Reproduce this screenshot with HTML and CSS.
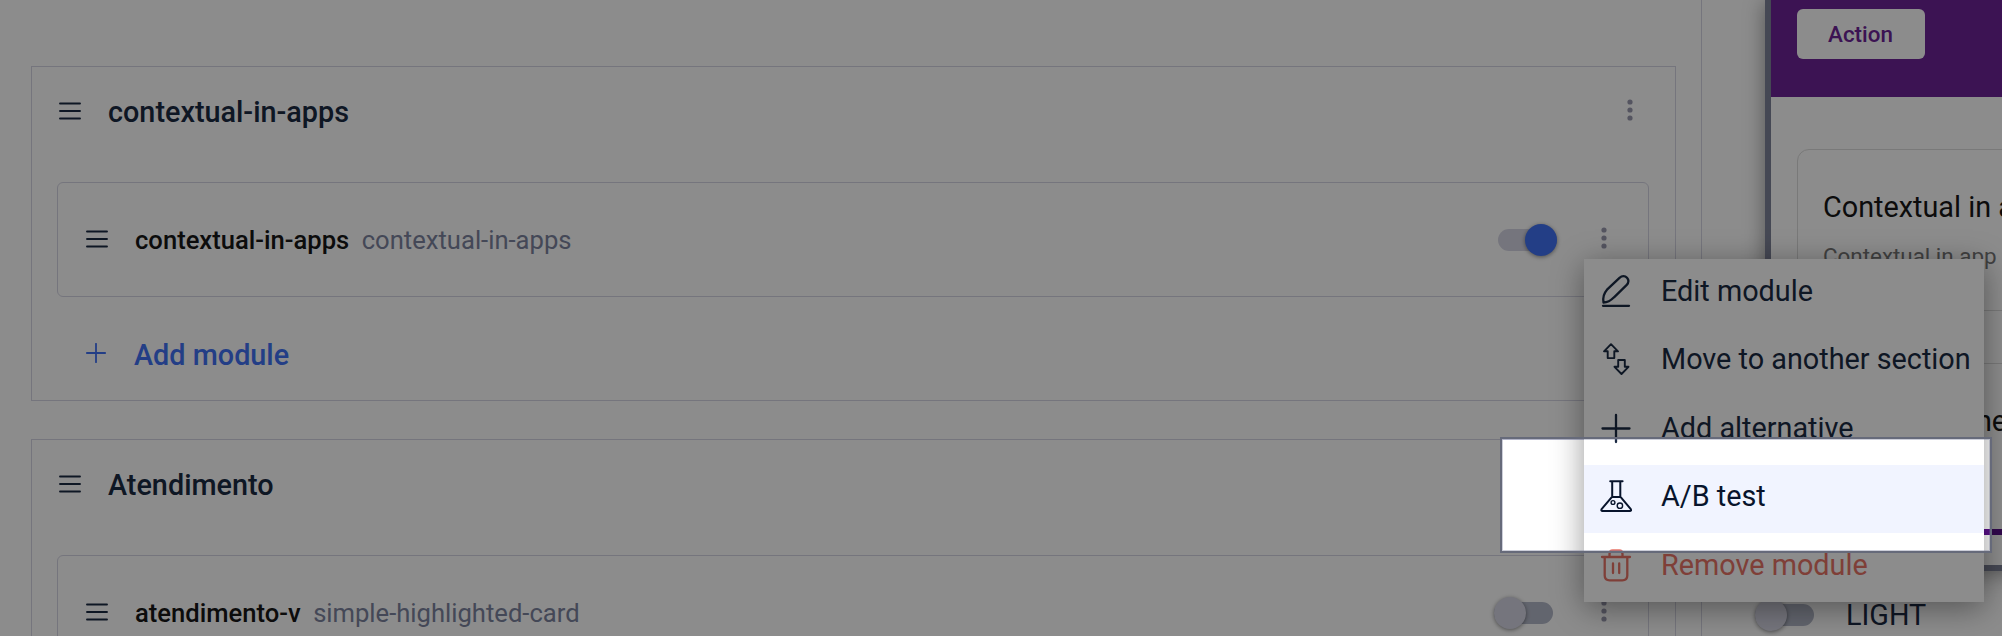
FILE: index.html
```html
<!DOCTYPE html>
<html lang="en">
<head>
<meta charset="utf-8">
<title>Modules</title>
<link rel="stylesheet" href="styles.css">
</head>
<body>
<svg class="defs" aria-hidden="true">
  <symbol id="drag" viewBox="0 0 22 18"><path d="M1 1.500h20M1 9h20M1 16.500h20" fill="none" stroke="currentColor" stroke-width="1.900" stroke-linecap="round"/></symbol>
  <symbol id="dots" viewBox="0 0 6 22"><g fill="currentColor"><circle cx="3" cy="3" r="2.600"/><circle cx="3" cy="11" r="2.600"/><circle cx="3" cy="19" r="2.600"/></g></symbol>
</svg>
<div class="page">
  <main class="editor">
    <section class="section">
      <header class="section-head"><svg class="drag"><use href="#drag"/></svg><h2 class="section-title">contextual-in-apps</h2><svg class="dots"><use href="#dots"/></svg></header>
      <div class="module">
        <svg class="drag"><use href="#drag"/></svg><strong class="name">contextual-in-apps</strong><span class="kind">contextual-in-apps</span>
        <span class="toggle on"><i class="knob"></i></span><svg class="dots"><use href="#dots"/></svg>
      </div>
      <div class="add"><svg class="add-icon" viewBox="0 0 20 20"><path d="M10 .8v18.400M.8 10h18.400" fill="none" stroke="currentColor" stroke-width="1.800" stroke-linecap="round"/></svg><span>Add module</span></div>
    </section>
    <section class="section">
      <header class="section-head"><svg class="drag"><use href="#drag"/></svg><h2 class="section-title">Atendimento</h2><svg class="dots"><use href="#dots"/></svg></header>
      <div class="module">
        <svg class="drag"><use href="#drag"/></svg><strong class="name">atendimento-v</strong><span class="kind">simple-highlighted-card</span>
        <span class="toggle off"><i class="knob"></i></span><svg class="dots"><use href="#dots"/></svg>
      </div>
    </section>
  </main>
  <aside class="preview">
    <div class="phone">
      <div class="hero"><span class="action">Action</span></div>
      <div class="cards">
        <article class="card"><h3 class="card-title">Contextual in app</h3><p class="card-text">Contextual in app</p></article>
        <article class="card second"><h3 class="card-title">Good headline</h3></article>
      </div>
      <div class="tabline"></div>
    </div>
    <div class="theme"><span class="toggle off theme-toggle"><i class="knob"></i></span><span>LIGHT</span></div>
  </aside>
</div>
<div class="menu">
  <div class="item"><svg class="icon" viewBox="0 0 32 32"><path d="M3.500 27.500C2.600 22.700 4 18.200 7 14.700L19.500 2.800C22 .5 25 .5 27 2.800C29 5 28.600 8 26.500 10.200L14 22.300C11 25.400 7.500 27.500 3.500 27.500Z"/><path d="M3 30.800h26"/></svg><span>Edit module</span></div>
  <div class="item"><svg class="icon thin" viewBox="0 0 32 32"><path d="M11 1.200L18 8.300H14.300V15.100H7.700V8.300H4Z"/><path d="M21.500 31L14.500 23.800H18.200V17H24.800V23.800H28.500Z"/></svg><span>Move to another section</span></div>
  <div class="item tall"><svg class="icon" viewBox="0 0 32 32"><path d="M16 3v27M2.500 16.500h27"/></svg><span>Add alternative</span></div>
  <div class="item active"><svg class="icon flask" viewBox="0 0 32 32"><path d="M10.200 1.300h12.400M12.200 1.300V16.700L1.600 29.200Q.8 31 2.600 31H29.800Q31.600 31 30.800 29.200L20.300 16.700V1.300M12.200 16.900h8.100"/><circle class="bubble" cx="13" cy="22.500" r="1.900"/><circle class="bubble" cx="19.900" cy="25.700" r="2.700"/></svg><span>A/B test</span></div>
  <div class="item danger"><svg class="icon" viewBox="0 0 32 32"><path d="M2 8h28M9.500 7.500V5Q9.500 1.500 12.700 1.500H19.300Q22.500 1.500 22.500 5V7.500M4.700 8.500V26.500Q4.700 31.300 9.700 31.300H22.300Q27.300 31.300 27.300 26.500V8.500M13 14.500v9.500M19.200 14.500v9.500"/></svg><span>Remove module</span></div>
</div>
<div class="spotlight"></div>
</body>
</html>
```

FILE: styles.css
```css
* { box-sizing: border-box; }
body { margin: 0; width: 2002px; height: 636px; overflow: hidden; position: relative; background: #fff; color: #1b2a43; font-family: Roboto, sans-serif; }
h2, h3, p { margin: 0; }
.defs { position: absolute; width: 0; height: 0; }
.page { display: flex; height: 636px; overflow: hidden; }
.editor { flex: none; width: 1702px; padding: 66px 25px 0 31px; border-right: 1px solid #d6d6e4; display: flex; flex-direction: column; gap: 38px; }
.section { flex: none; height: 335px; padding: 0 26px 0 25px; border: 1px solid #d6d6e4; }
.section-head { display: flex; align-items: center; height: 115px; padding: 0 16px 27px 2px; }
.drag { flex: none; width: 22px; height: 18px; }
.dots { flex: none; width: 6px; height: 22px; margin-bottom: 2px; color: #9a9aaf; }
.section-title { flex: 1; margin: 1px 0 0 27px; font-size: 28.8px; line-height: 36px; font-weight: 500; }
.module { display: flex; align-items: center; height: 115px; padding: 0 41px 0 28px; border: 1px solid #d6d6e4; border-radius: 6px; }
.module .drag { margin-bottom: 2px; }
.module .dots { margin-bottom: 4px; }
.name { margin-left: 27px; font-size: 25.6px; font-weight: 500; color: #161616; }
.kind { flex: 1; margin-left: 12.500px; font-size: 25.6px; color: #7c839e; }
.toggle { flex: none; display: flex; align-items: center; width: 59px; height: 22px; border-radius: 11px; background: #d6d6e4; }
.knob { width: 32px; height: 32px; border-radius: 50%; box-shadow: 0 1px 4px rgba(0,0,0,.45); }
.on { justify-content: flex-end; margin-right: 44px; }
.on .knob { background: #4072f5; }
.off { margin-right: 48px; background: #b3b8c8; }
.off .knob { background: #d6d6e4; }
.add { display: flex; align-items: center; height: 104px; padding: 12px 0 0 29px; color: #4072f5; font-size: 28.8px; font-weight: 500; }
.add-icon { width: 20px; height: 20px; margin: 0 28px 4px 0; }
.preview { flex: none; width: 300px; padding-left: 63px; }
.phone { width: 330px; height: 571px; border: solid #7f8499; border-width: 0 0 6px 6px; background: #fff; box-shadow: 0 2px 20px rgba(0,0,0,.4); }
.hero { height: 97px; padding: 9px 26px; background: #6d2397; }
.action { display: flex; align-items: center; justify-content: center; width: 128px; height: 50px; padding-right: 1px; border-radius: 6px; background: #fff; color: #6d2397; font-size: 22.4px; font-weight: 500; }
.cards { display: flex; flex-direction: column; gap: 52px; padding: 52px 26px 0; }
.card { height: 162px; padding: 38px 25px; border: 1px solid #dcdcdc; border-radius: 12px; white-space: nowrap; }
.second { height: 166px; border-bottom: 0; border-radius: 12px 12px 0 0; }
.card-title { font-size: 28.8px; line-height: 38px; font-weight: 400; color: #161616; }
.card-text { margin-top: 16px; font-size: 22.4px; line-height: 28px; color: #777; }
.tabline { height: 6px; background: #5b0f8c; }
.theme { display: flex; align-items: center; height: 90px; margin: -1px 0 0 -10px; font-size: 28.8px; }
.theme-toggle { margin-right: 32px; }
.menu { position: absolute; left: 1584px; top: 259px; width: 400px; height: 343px; padding-top: 1px; background: #fff; box-shadow: 0 6px 30px rgba(0,0,0,.4); }
.item { display: flex; align-items: center; gap: 29px; height: 68px; padding: 0 0 6px 16px; font-size: 28.8px; color: #1b2a43; white-space: nowrap; }
.tall { height: 69px; }
.active { background: #f1f4ff; color: #08142c; }
.danger { padding-bottom: 4px; color: #e77467; }
.icon { flex: none; width: 32px; height: 32px; overflow: visible; fill: none; stroke: currentColor; stroke-width: 2.300; stroke-linecap: round; stroke-linejoin: round; }
.thin { stroke-width: 1.900; }
.flask { stroke-width: 2; }
.bubble { stroke-width: 1.400; }
.spotlight { position: absolute; left: 1500px; top: 437px; width: 492px; height: 116px; border: 2px solid #666a7a; box-shadow: 0 0 0 2100px rgba(0,0,0,.45), inset 0 0 0 1px rgba(110,115,145,.35); }
```
